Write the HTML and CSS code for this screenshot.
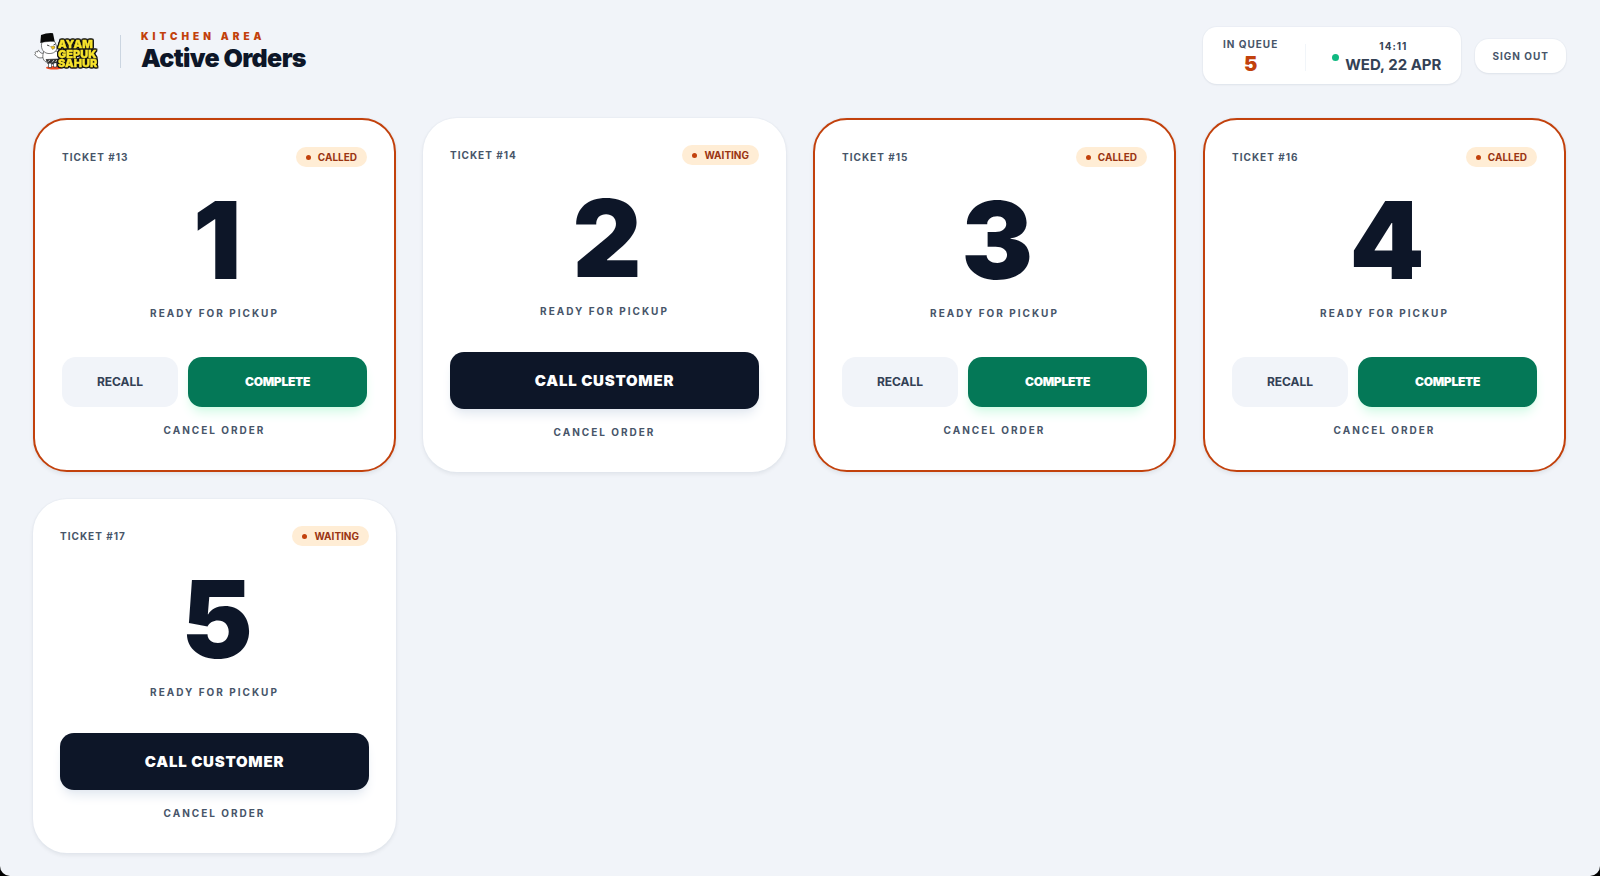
FILE: index.html
```html
<!DOCTYPE html>
<html lang="en">
<head>
<meta charset="utf-8">
<meta name="viewport" content="width=device-width, initial-scale=1">
<title>Kitchen Area – Active Orders</title>
<link rel="stylesheet" href="styles.css">
</head>
<body>
<div class="page">
  <header class="topbar">
    <div class="brand">
      <svg class="logo" viewBox="0 0 64 37" role="img" aria-label="Ayam Gepuk Sahur">
        <ellipse cx="20" cy="34.700" rx="8" ry="1.800" fill="#f0481f"/>
        <g stroke="#222" stroke-width=".6" stroke-linejoin="round">
          <path d="M10 20C7 21 6 19.500 5 17.500C4 17 3.500 18 3.800 19C2 18 .5 19 1.500 20.500C.3 21 .8 22.500 2.300 22.800C3.500 25.500 8 25.500 11 23.500Z" fill="#fff"/>
          <path d="M10 18C8 23 8.500 27 12 29H24C26 26 26 21 22.500 18Z" fill="#fff"/>
          <path d="M8 9C6.500 14 8 19.500 14 20.500C20 21 23.500 18 22.500 13.500C22 11 21 9 20 8Z" fill="#fff"/>
          <path d="M12 26.500L24 26V29.500L21 31H14Z" fill="#333"/>
          <path d="M14.500 30.500V34.500H17.500V30.500M19.500 30.500V34H22.500V30" fill="#fff"/>
          <path d="M16.500 13.500L20.500 13L21 15L18.500 16.500Z" fill="#f6c51c" stroke-width=".3"/>
        </g>
        <path d="M7 2Q13 -.3 19 .2L20.700 8.600Q13 7.500 6.300 10Z" fill="#090909"/>
        <path d="M13 12L15.500 13M19.500 12L21.500 11" stroke="#111" stroke-width=".8"/>
        <path d="M13.500 29L16 27M18 29.500L20 27M21.500 29L23 27" stroke="#fff" stroke-width=".7"/>
        <g class="logo-words">
          <text x="24" y="15">AYAM</text>
          <text x="24" y="24.500">GEPUK</text>
          <text x="24" y="34">SAHUR</text>
        </g>
      </svg>
      <div class="brand-rule"></div>
      <div>
        <p class="eyebrow">KITCHEN AREA</p>
        <h1 class="title">Active Orders</h1>
      </div>
    </div>
    <div class="tools">
      <div class="status">
        <div class="queue">
          <span class="small-label">IN QUEUE</span>
          <strong class="queue-count">5</strong>
        </div>
        <div class="status-rule"></div>
        <div class="clock">
          <span class="live-dot"></span>
          <div class="clock-text">
            <span class="time">14:11</span>
            <span class="date">WED, 22 APR</span>
          </div>
        </div>
      </div>
      <button class="sign-out" type="button">SIGN OUT</button>
    </div>
  </header>

  <main class="orders">
    <article class="card card-called">
      <div class="card-head"><span class="ticket">TICKET #13</span><span class="badge">CALLED</span></div>
      <h2 class="number">1</h2>
      <p class="ready">READY FOR PICKUP</p>
      <div class="actions">
        <div class="pair"><button class="btn recall" type="button">RECALL</button><button class="btn complete" type="button">COMPLETE</button></div>
        <button class="cancel" type="button">CANCEL ORDER</button>
      </div>
    </article>
    <article class="card">
      <div class="card-head"><span class="ticket">TICKET #14</span><span class="badge">WAITING</span></div>
      <h2 class="number">2</h2>
      <p class="ready">READY FOR PICKUP</p>
      <div class="actions">
        <button class="btn call" type="button">CALL CUSTOMER</button>
        <button class="cancel" type="button">CANCEL ORDER</button>
      </div>
    </article>
    <article class="card card-called">
      <div class="card-head"><span class="ticket">TICKET #15</span><span class="badge">CALLED</span></div>
      <h2 class="number">3</h2>
      <p class="ready">READY FOR PICKUP</p>
      <div class="actions">
        <div class="pair"><button class="btn recall" type="button">RECALL</button><button class="btn complete" type="button">COMPLETE</button></div>
        <button class="cancel" type="button">CANCEL ORDER</button>
      </div>
    </article>
    <article class="card card-called">
      <div class="card-head"><span class="ticket">TICKET #16</span><span class="badge">CALLED</span></div>
      <h2 class="number">4</h2>
      <p class="ready">READY FOR PICKUP</p>
      <div class="actions">
        <div class="pair"><button class="btn recall" type="button">RECALL</button><button class="btn complete" type="button">COMPLETE</button></div>
        <button class="cancel" type="button">CANCEL ORDER</button>
      </div>
    </article>
    <article class="card">
      <div class="card-head"><span class="ticket">TICKET #17</span><span class="badge">WAITING</span></div>
      <h2 class="number">5</h2>
      <p class="ready">READY FOR PICKUP</p>
      <div class="actions">
        <button class="btn call" type="button">CALL CUSTOMER</button>
        <button class="cancel" type="button">CANCEL ORDER</button>
      </div>
    </article>
  </main>
</div>
</body>
</html>
```
FILE: styles.css
```css
*, *::before, *::after { box-sizing: border-box; }

html { background: #000; }

body {
  margin: 0;
  font-family: Inter, "Liberation Sans", sans-serif;
  color: #0d1628;
}

h1, h2, p { margin: 0; }

button {
  font-family: inherit;
  border: 0;
  cursor: pointer;
}

.page {
  min-height: 100vh;
  padding: 27px 34px 20px 33px;
  background: #f1f4f9;
  border-radius: 0 0 10px 10px;
}

/* Top bar */
.topbar {
  display: flex;
  justify-content: space-between;
  align-items: flex-start;
  margin-bottom: 34px;
}

.brand {
  display: flex;
  align-items: center;
  padding: 3px 0 0 1px;
}

.logo { width: 64px; height: 37px; overflow: visible; }

.logo-words {
  font-weight: 900;
  font-size: 11px;
  fill: #f7e32c;
  stroke: #f7e32c;
  stroke-width: 0.3px;
  filter: drop-shadow(1px 0 0 #111) drop-shadow(-1px 0 0 #111) drop-shadow(0 1px 0 #111) drop-shadow(0 -1px 0 #111);
}

.brand-rule {
  width: 1px;
  height: 33px;
  margin: 0 20px 0 22px;
  background: #cbd5e1;
}

.eyebrow {
  font-size: 10px;
  line-height: 13px;
  font-weight: 900;
  letter-spacing: 0.4em;
  color: #c2410c;
}

.title {
  font-size: 25px;
  line-height: 30px;
  font-weight: 900;
  letter-spacing: -0.025em;
}

.tools {
  display: flex;
  align-items: center;
  gap: 14px;
}

.status {
  display: flex;
  align-items: center;
  padding: 10px 20px 7px;
  background: #fff;
  border-radius: 14px;
  box-shadow: 0 0 0 1px #e2e8f060, 0 1px 2px #0f172a14;
}

.queue, .clock-text {
  display: flex;
  flex-direction: column;
  align-items: center;
}

.small-label {
  font-size: 10px;
  line-height: 14px;
  font-weight: 700;
  letter-spacing: 0.1em;
  color: #475569;
}

.queue-count {
  font-size: 20px;
  line-height: 26px;
  font-weight: 900;
  color: #c2410c;
}

.status-rule {
  width: 1px;
  height: 27px;
  margin: 0 26px 0 27px;
  background: #f1f5f9;
}

.clock {
  display: flex;
  align-items: center;
  gap: 6px;
}

.live-dot {
  width: 7px;
  height: 7px;
  border-radius: 50%;
  background: #10b981;
}

.time {
  font-size: 10px;
  line-height: 14px;
  font-weight: 700;
  letter-spacing: 0.1em;
  color: #334155;
}

.date {
  font-size: 15px;
  line-height: 23px;
  font-weight: 700;
  color: #334155;
}

.sign-out {
  padding: 10px 17px;
  font-size: 10px;
  line-height: 14px;
  font-weight: 700;
  letter-spacing: 0.1em;
  color: #475569;
  background: #fff;
  border-radius: 14px;
  box-shadow: 0 0 0 1px #e2e8f060, 0 1px 2px #0f172a14;
}

/* Order cards */
.orders {
  display: grid;
  grid-template-columns: repeat(auto-fill, minmax(320px, 1fr));
  gap: 27px;
}

.card {
  display: flex;
  flex-direction: column;
  padding: 27px 27px 26px;
  background: #fff;
  border-radius: 34px;
  box-shadow: 0 0 0 1px #e2e8f060, 0 2px 4px #0f172a14;
}

.card-called { border: 2px solid #c2410c; }

.card-head {
  display: flex;
  justify-content: space-between;
  align-items: center;
}

.ticket {
  font-size: 10px;
  line-height: 14px;
  font-weight: 700;
  letter-spacing: 0.1em;
  color: #475569;
}

.badge {
  display: flex;
  align-items: center;
  gap: 7px;
  padding: 3px 10px;
  font-size: 10px;
  line-height: 14px;
  font-weight: 700;
  color: #9a3412;
  background: #ffedd5;
  border-radius: 10px;
}

.badge::before {
  content: "";
  width: 5px;
  height: 5px;
  border-radius: 50%;
  background: #c2410c;
}

.number {
  margin-top: 20px;
  font-size: 107px;
  line-height: 107px;
  font-weight: 900;
  letter-spacing: -0.05em;
  text-align: center;
}

.ready {
  margin-top: 13px;
  margin-bottom: 34px;
  font-size: 10px;
  line-height: 13px;
  font-weight: 700;
  letter-spacing: 0.2em;
  text-align: center;
  color: #475569;
}

.actions {
  display: flex;
  flex-direction: column;
  gap: 10px;
  margin-top: auto;
}

.pair {
  display: grid;
  grid-template-columns: repeat(5, 1fr);
  gap: 10px;
}

.btn {
  padding: 17px 10px;
  font-size: 12px;
  line-height: 16px;
  border-radius: 14px;
}

.recall {
  grid-column: span 2;
  font-weight: 700;
  color: #334155;
  background: #f1f4f9;
}

.complete {
  grid-column: span 3;
  font-weight: 900;
  letter-spacing: -0.025em;
  color: #fff;
  background: #047857;
  box-shadow: 0 8px 12px -3px #d1fae5, 0 3px 5px -3px #d1fae5;
}

.call {
  font-size: 15px;
  line-height: 23px;
  font-weight: 900;
  letter-spacing: 0.05em;
  color: #fff;
  background: #0d1628;
  box-shadow: 0 8px 12px -3px #e2e8f0, 0 3px 5px -3px #e2e8f0;
}

.cancel {
  padding: 7px 0;
  font-size: 10px;
  line-height: 13px;
  font-weight: 700;
  letter-spacing: 0.2em;
  color: #475569;
  background: transparent;
}
```
